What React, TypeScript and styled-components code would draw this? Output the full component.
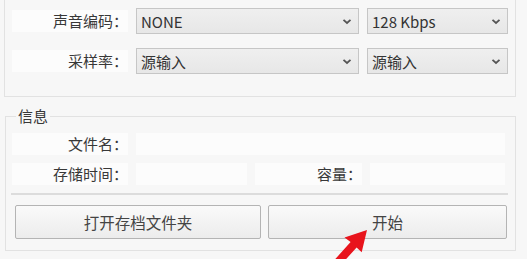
import styled, { createGlobalStyle } from "styled-components";

const GlobalStyle = createGlobalStyle`
	*, *::before, *::after {
		box-sizing: border-box;
	}
	html, body {
		margin: 0;
		padding: 0;
		background: #f7f7f7;
	}
	body {
		font-family: "Noto Sans CJK SC", "Noto Sans", sans-serif;
		color: #333;
	}
`;

const Page = styled.div`
	position: relative;
	width: 527px;
	height: 259px;
	overflow: hidden;
`;

const TopGroup = styled.div`
	margin: -6px 11px 0 4px;
	height: 103px;
	border: 1px solid #e2e2e2;
	padding: 13px 0 0 7px;
	display: grid;
	grid-template-columns: 116px 223px 141px;
	grid-auto-rows: 26px;
	column-gap: 8px;
	row-gap: 14px;
	align-content: start;
`;

const Label = styled.div`
	align-self: center;
	height: 22px;
	line-height: 22px;
	background: #fcfcfc;
	text-align: right;
	font-size: 15px;
	color: #383838;
	white-space: nowrap;
`;

const Combo = styled.div`
	display: flex;
	align-items: center;
	justify-content: space-between;
	border: 1px solid #c6c6c6;
	background: linear-gradient(#efefef, #e7e7e7);
	padding: 0 6px 0 4px;
	font-size: 15px;
	color: #333;
	white-space: nowrap;
`;

const InfoSet = styled.fieldset`
	margin: 9px 11px 0 5px;
	border: 1px solid #e2e2e2;
	padding: 7px 6px 11px 6px;
	min-width: 0;
`;

const Legend = styled.legend`
	margin-left: 4px;
	padding: 0 2px;
	font-size: 15px;
	line-height: 20px;
	color: #383838;
`;

const InfoGrid = styled.div`
	display: grid;
	grid-template-columns: 116px 111px 107px 1fr;
	grid-auto-rows: 22px;
	column-gap: 8px;
	row-gap: 8px;
	margin-right: 4px;
`;

const Value = styled.div<{ $wide?: boolean }>`
	background: #fcfcfc;
	grid-column: ${(p) => (p.$wide ? "2 / -1" : "auto")};
`;

const Separator = styled.div`
	height: 2px;
	background: #dcdcdc;
	margin: 8px 1px 10px -1px;
`;

const ButtonRow = styled.div`
	display: grid;
	grid-template-columns: 246px 239px;
	column-gap: 7px;
	padding-left: 3px;
`;

const Button = styled.button`
	height: 34px;
	border: 1px solid #b4b4b4;
	border-radius: 2px;
	background: linear-gradient(#fafafa, #ececec);
	font-family: inherit;
	font-size: 15.5px;
	color: #444;
	padding: 0;
`;

const Overlay = styled.svg`
	position: absolute;
	left: 0;
	top: 0;
	pointer-events: none;
`;

function Chevron() {
	return (
		<svg width="10" height="7" viewBox="0 0 10 7">
			<polyline
				points="1.5,1.8 5,5 8.5,1.8"
				fill="none"
				stroke="#555"
				strokeWidth="1.8"
			/>
		</svg>
	);
}

function App() {
	return (
		<Page>
			<GlobalStyle />
			<TopGroup>
				<Label>声音编码：</Label>
				<Combo>
					NONE
					<Chevron />
				</Combo>
				<Combo>
					128 Kbps
					<Chevron />
				</Combo>
				<Label>采样率：</Label>
				<Combo>
					源输入
					<Chevron />
				</Combo>
				<Combo>
					源输入
					<Chevron />
				</Combo>
			</TopGroup>

			<InfoSet>
				<Legend>信息</Legend>
				<InfoGrid>
					<Label>文件名：</Label>
					<Value $wide />
					<Label>存储时间：</Label>
					<Value />
					<Label>容量：</Label>
					<Value />
				</InfoGrid>
				<Separator />
				<ButtonRow>
					<Button>打开存档文件夹</Button>
					<Button>开始</Button>
				</ButtonRow>
			</InfoSet>

			<Overlay width="527" height="259" viewBox="0 0 527 259">
				<polygon
					points="367,230 361.7,252.2 356.6,247.5 336.5,269.7 330.5,264.3 350.6,242.1 344.5,237.4"
					fill="#e8141c"
				/>
			</Overlay>
		</Page>
	);
}

export default App;
